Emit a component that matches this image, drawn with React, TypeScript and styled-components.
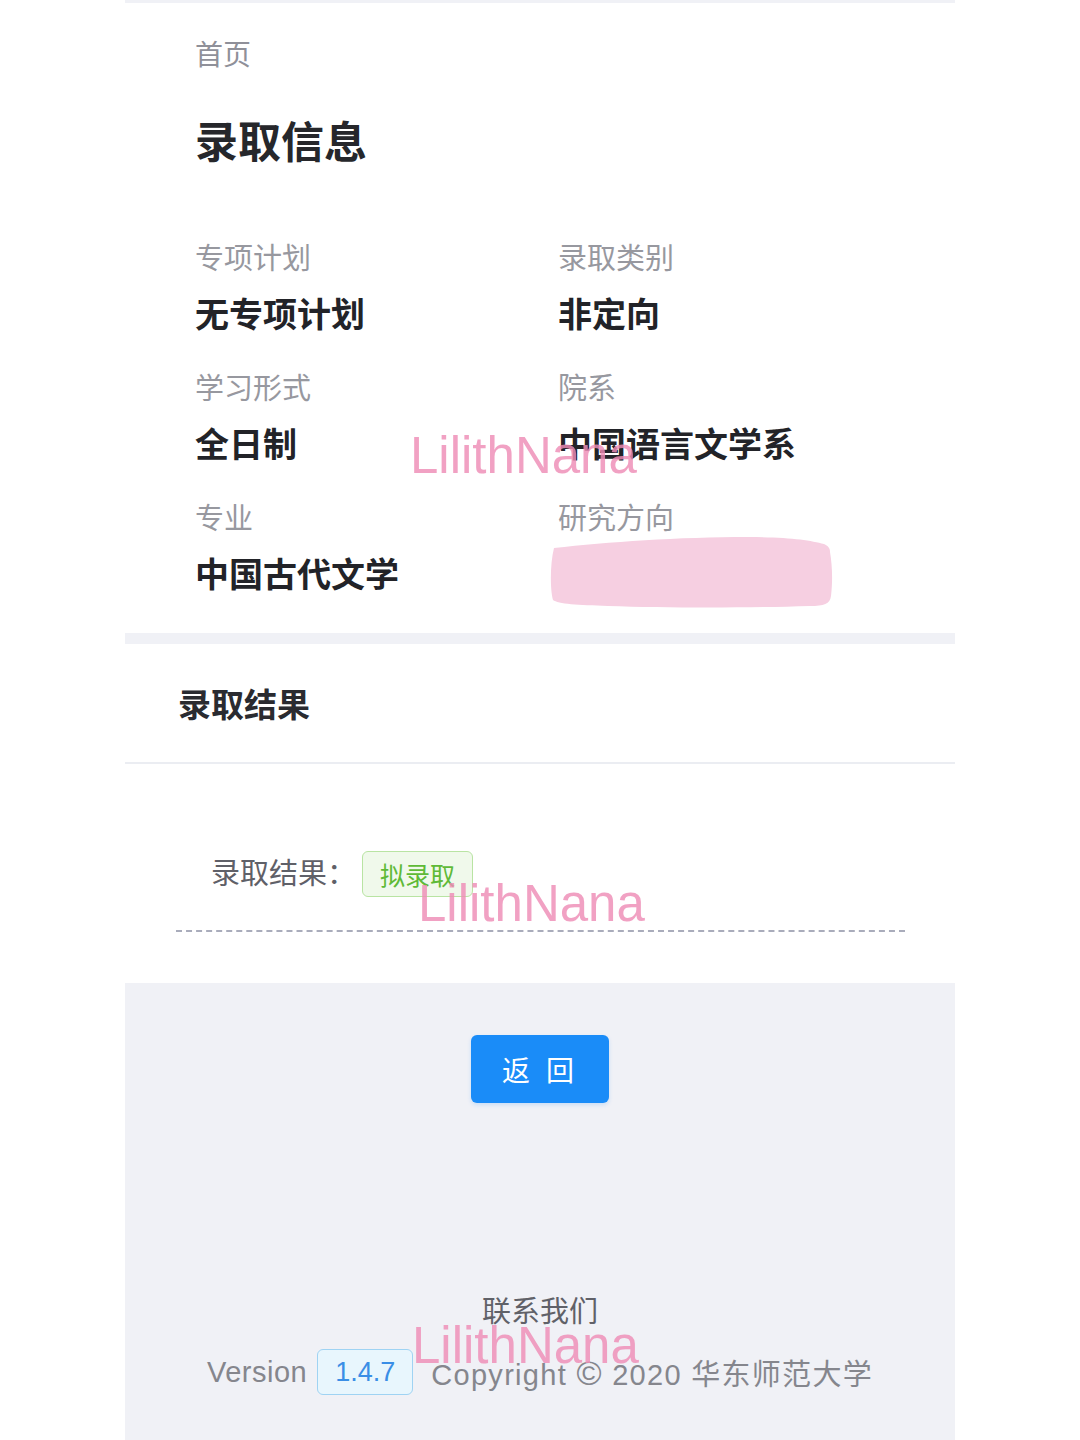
import React from "react";
import styled, { createGlobalStyle } from "styled-components";

const GlobalStyle = createGlobalStyle`
  html, body { margin: 0; padding: 0; background: #ffffff; }
  body { font-family: "Liberation Sans", "Noto Sans CJK SC", sans-serif; }
  * { box-sizing: border-box; }
`;

const CJK = `"Liberation Sans", "Noto Sans CJK SC", sans-serif`;

const Page = styled.div`
  position: relative;
  width: 1080px;
  min-height: 1440px;
  background: #ffffff;
  overflow: hidden;
`;

const Column = styled.div`
  width: 830px;
  min-height: 1440px;
  margin: 0 auto;
  background: #f0f1f6;
  padding-top: 3px;
  display: flex;
  flex-direction: column;
`;

const InfoCard = styled.section`
  background: #ffffff;
  padding: 33px 0 34px 70px;
`;

const Breadcrumb = styled.div`
  font-family: ${CJK};
  font-size: 28px;
  line-height: 39px;
  color: #8f9099;
`;

const Title = styled.h1`
  margin: 38px 0 0;
  font-family: ${CJK};
  font-size: 43px;
  line-height: 60px;
  font-weight: 700;
  color: #26272b;
`;

const InfoGrid = styled.div`
  margin-top: 66px;
  display: grid;
  grid-template-columns: 363px 1fr;
  row-gap: 30px;
`;

const Field = styled.div`
  display: flex;
  flex-direction: column;
  gap: 12px;
`;

const FieldLabel = styled.div`
  font-family: ${CJK};
  font-size: 29px;
  line-height: 40px;
  color: #97989f;
`;

const FieldValue = styled.div`
  font-family: ${CJK};
  font-size: 34px;
  line-height: 48px;
  font-weight: 700;
  color: #222328;
  min-height: 48px;
`;

const ResultCard = styled.section`
  margin-top: 11px;
  background: #ffffff;
`;

const CardHeader = styled.div`
  height: 120px;
  display: flex;
  align-items: center;
  padding-left: 53px;
  border-bottom: 2px solid #ebedf2;
  font-family: ${CJK};
  font-size: 33px;
  font-weight: 700;
  color: #2a2b30;
`;

const CardBody = styled.div`
  padding: 54px 50px 51px 51px;
`;

const ResultRow = styled.div`
  display: flex;
  align-items: center;
  padding: 33px 35px;
  border-bottom: 2px dashed #a9acbb;
`;

const ResultLabel = styled.span`
  font-family: ${CJK};
  font-size: 29px;
  line-height: 40px;
  color: #5f6068;
`;

const Tag = styled.span<{ $tone: "green" | "blue" }>`
  display: inline-flex;
  align-items: center;
  height: 46px;
  padding: 0 17px;
  border-radius: 6px;
  font-family: ${CJK};
  font-size: ${(p) => (p.$tone === "green" ? "25px" : "27px")};
  border: 1.5px solid ${(p) => (p.$tone === "green" ? "#b9e4a3" : "#9fd3f3")};
  background: ${(p) => (p.$tone === "green" ? "#f0f9eb" : "#e8f6fd")};
  color: ${(p) => (p.$tone === "green" ? "#5fba37" : "#3a8ee6")};
`;

const GreyArea = styled.div`
  flex: 1;
  display: flex;
  flex-direction: column;
  align-items: center;
  padding-top: 52px;
`;

const BackButton = styled.button`
  width: 138px;
  height: 68px;
  border: none;
  border-radius: 6px;
  background: #1a8cf8;
  color: #ffffff;
  font-family: ${CJK};
  font-size: 28px;
  letter-spacing: 4px;
  box-shadow: 0 2px 4px rgba(26, 140, 248, 0.18);
  cursor: pointer;
`;

const Contact = styled.div`
  margin-top: 189px;
  font-family: ${CJK};
  font-size: 29px;
  line-height: 40px;
  color: #606168;
`;

const VersionRow = styled.div`
  margin-top: 17px;
  display: flex;
  align-items: center;
  font-family: ${CJK};
  font-size: 29px;
  color: #85868d;
`;

const VersionText = styled.span`
  margin-right: 10px;
  letter-spacing: 0.5px;
`;

const Copyright = styled.span`
  margin-left: 18px;
  letter-spacing: 1.3px;
`;

const CopySign = styled.span`
  font-size: 34px;
  line-height: 1;
`;

const Watermark = styled.div<{ $top: number; $left: number }>`
  position: absolute;
  top: ${(p) => p.$top}px;
  left: ${(p) => p.$left}px;
  font-family: "Liberation Sans", sans-serif;
  font-size: 51px;
  line-height: 1;
  color: rgba(238, 140, 182, 0.82);
  pointer-events: none;
  white-space: nowrap;
`;

const Redaction = styled.svg`
  position: absolute;
  top: 534px;
  left: 548px;
  pointer-events: none;
`;

const fields: { label: string; value: string }[] = [
  { label: "专项计划", value: "无专项计划" },
  { label: "录取类别", value: "非定向" },
  { label: "学习形式", value: "全日制" },
  { label: "院系", value: "中国语言文学系" },
  { label: "专业", value: "中国古代文学" },
  { label: "研究方向", value: "" },
];

export default function App() {
  return (
    <>
      <GlobalStyle />
      <Page>
        <Column>
          <InfoCard>
            <Breadcrumb>首页</Breadcrumb>
            <Title>录取信息</Title>
            <InfoGrid>
              {fields.map((f) => (
                <Field key={f.label}>
                  <FieldLabel>{f.label}</FieldLabel>
                  <FieldValue>{f.value}</FieldValue>
                </Field>
              ))}
            </InfoGrid>
          </InfoCard>
          <ResultCard>
            <CardHeader>录取结果</CardHeader>
            <CardBody>
              <ResultRow>
                <ResultLabel>录取结果：</ResultLabel>
                <Tag $tone="green" style={{ marginLeft: 6 }}>拟录取</Tag>
              </ResultRow>
            </CardBody>
          </ResultCard>
          <GreyArea>
            <BackButton>返 回</BackButton>
            <Contact>联系我们</Contact>
            <VersionRow>
              <VersionText>Version</VersionText>
              <Tag $tone="blue">1.4.7</Tag>
              <Copyright>
                Copyright <CopySign>©</CopySign> 2020 华东师范大学
              </Copyright>
            </VersionRow>
          </GreyArea>
        </Column>

        <Redaction width="290" height="78" viewBox="0 0 290 78">
          <path
            d="M6 14 C 60 8, 130 3, 200 3 C 240 3, 262 6, 276 10 C 280 12, 282 14, 282 18 C 284 30, 285 45, 283 62 C 282 70, 276 72, 262 72 C 200 74, 120 74, 60 72 C 30 71, 10 70, 5 66 C 2 55, 2 30, 6 14 Z"
            fill="#f6cfe1"
          />
        </Redaction>
        <Watermark $top={430} $left={410}>LilithNana</Watermark>
        <Watermark $top={878} $left={418}>LilithNana</Watermark>
        <Watermark $top={1320} $left={412}>LilithNana</Watermark>
      </Page>
    </>
  );
}
